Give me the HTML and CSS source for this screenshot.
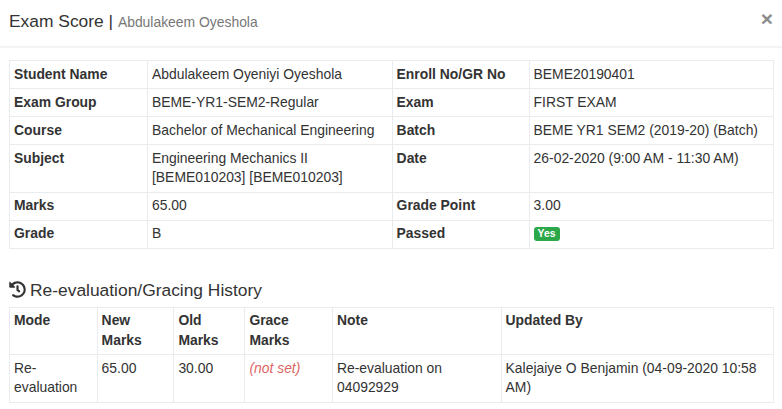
FILE: index.html
```html
<!DOCTYPE html>
<html lang="en">
<head>
<meta charset="utf-8">
<title>Exam Score</title>
<link rel="stylesheet" href="styles.css">
</head>
<body>
<header class="modal-header">
  <h4 class="modal-title">Exam Score | <small class="title-sub">Abdulakeem Oyeshola</small></h4>
  <button class="close" type="button">×</button>
</header>
<main class="modal-body">
  <table class="grid detail">
    <colgroup><col class="d1"><col class="d2"><col class="d3"><col class="d4"></colgroup>
    <tbody>
      <tr><th>Student Name</th><td>Abdulakeem Oyeniyi Oyeshola</td><th>Enroll No/GR No</th><td>BEME20190401</td></tr>
      <tr><th>Exam Group</th><td>BEME-YR1-SEM2-Regular</td><th>Exam</th><td>FIRST EXAM</td></tr>
      <tr><th>Course</th><td>Bachelor of Mechanical Engineering</td><th>Batch</th><td>BEME YR1 SEM2 (2019-20) (Batch)</td></tr>
      <tr><th>Subject</th><td>Engineering Mechanics II<br>[BEME010203] [BEME010203]</td><th>Date</th><td>26-02-2020 (9:00 AM - 11:30 AM)</td></tr>
      <tr><th>Marks</th><td>65.00</td><th>Grade Point</th><td>3.00</td></tr>
      <tr><th>Grade</th><td>B</td><th>Passed</th><td><span class="label-yes">Yes</span></td></tr>
    </tbody>
  </table>
  <h2 class="history-title">
    <svg class="history-icon" viewBox="0 0 512 512" aria-hidden="true"><path d="M504 255.5c.3 136.6-111.2 248.4-247.8 248.5-59 0-113.2-20.5-155.8-54.9-11.1-8.9-11.9-25.5-1.8-35.6l11.3-11.3c8.6-8.6 22.4-9.6 31.9-2C173.1 425.1 212.8 440 256 440c101.7 0 184-82.3 184-184 0-101.7-82.3-184-184-184-48.8 0-93.1 19-126.1 49.9l50.8 50.8c10.1 10.1 2.9 27.3-11.3 27.3H24c-8.8 0-16-7.2-16-16V38.6c0-14.3 17.2-21.4 27.3-11.3l49.4 49.4C129.2 34.1 189.6 8 256 8c136.8 0 247.7 110.8 248 247.5zm-180.9 78.8l9.8-12.6c8.1-10.5 6.3-25.5-4.2-33.7L288 256.3V152c0-13.3-10.7-24-24-24h-16c-13.3 0-24 10.7-24 24v135.7l65.4 50.9c10.5 8.1 25.5 6.3 33.7-4.3z"/></svg>
    Re-evaluation/Gracing History
  </h2>
  <table class="grid history">
    <colgroup><col class="h1"><col class="h2"><col class="h3"><col class="h4"><col class="h5"><col class="h6"></colgroup>
    <thead>
      <tr><th>Mode</th><th>New Marks</th><th>Old Marks</th><th>Grace Marks</th><th>Note</th><th>Updated By</th></tr>
    </thead>
    <tbody>
      <tr><td>Re-evaluation</td><td>65.00</td><td>30.00</td><td><em class="not-set">(not set)</em></td><td>Re-evaluation on 04092929</td><td>Kalejaiye O Benjamin (04-09-2020 10:58 AM)</td></tr>
    </tbody>
  </table>
</main>
</body>
</html>
```
FILE: styles.css
```css
* { box-sizing: border-box; }
html, body { margin: 0; padding: 0; background: #fff; }
body {
  width: 782px;
  height: 409px;
  overflow: hidden;
  font-family: "Liberation Sans", Arial, sans-serif;
  font-size: 13.9px;
  line-height: 19.5px;
  color: #333;
}
.modal-header {
  display: flex;
  justify-content: space-between;
  align-items: flex-start;
  height: 48px;
  padding: 11px 9px 0;
  border-bottom: 2px solid #f4f4f4;
}
.modal-title {
  margin: 0;
  font-size: 17.4px;
  font-weight: 400;
  line-height: 20px;
}
.title-sub { font-size: 13.9px; color: #777; }
.close {
  margin: -3px 0 0;
  padding: 0;
  border: 0;
  background: none;
  font-family: inherit;
  font-size: 21px;
  font-weight: 700;
  line-height: 21px;
  color: #8c8c8c;
}
.modal-body { padding: 12px 8px 0 9px; }
.grid {
  width: 764px;
  table-layout: fixed;
  border-collapse: collapse;
  border: 1px solid #e9ecef;
}
.grid th, .grid td {
  padding: 3.75px 4px;
  border: 1px solid #e9ecef;
  text-align: left;
  vertical-align: top;
  font-size: 13.9px;
  line-height: 19.5px;
}
.grid th { font-weight: 700; }
.d1 { width: 138px; }
.d2 { width: 244.6px; }
.d3 { width: 137px; }
.d4 { width: 244.4px; }
.h1 { width: 87.6px; }
.h2 { width: 76.8px; }
.h3 { width: 71px; }
.h4 { width: 87.6px; }
.h5 { width: 168.6px; }
.h6 { width: 272.4px; }
.label-yes {
  display: inline-block;
  padding: 2px 4px 1.6px;
  border-radius: 3px;
  background: #2ba84a;
  color: #fff;
  font-size: 10.4px;
  font-weight: 700;
  line-height: 10.4px;
  vertical-align: 1px;
}
.history-title {
  display: flex;
  align-items: center;
  gap: 4px;
  margin: 31px 0 7px;
  font-size: 17.4px;
  font-weight: 400;
  line-height: 20px;
}
.history-icon { width: 17px; height: 17px; fill: #333; flex: none; }
.not-set { color: #d66; }
```
